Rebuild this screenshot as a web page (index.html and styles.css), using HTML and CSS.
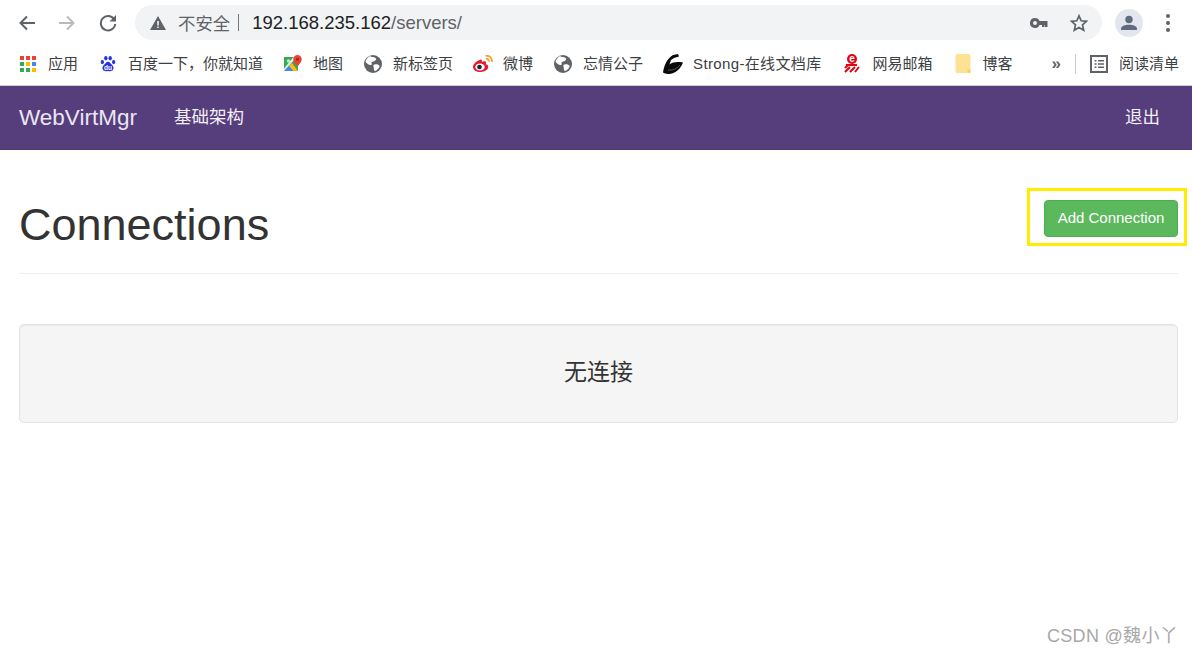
FILE: index.html
```html
<!DOCTYPE html>
<html lang="en">
<head>
    <meta charset="UTF-8">
    <title>WebVirtMgr</title>
    <link rel="stylesheet" href="styles.css">
</head>
<body>
    <div class="toolbar">
        <svg class="tool-icon" viewBox="0 0 18 18"><path d="M17 9H3M9 2.500L2.500 9 9 15.500" fill="none" stroke="#5f6368" stroke-width="2"/></svg>
        <svg class="tool-icon" viewBox="0 0 18 18"><path d="M1 9h14M9 2.500L15.500 9 9 15.500" fill="none" stroke="#b9bbbe" stroke-width="2"/></svg>
        <svg class="tool-icon reload" viewBox="0 0 18 18"><path d="M15 5.200A7.200 7.200 0 1 0 16.200 10" fill="none" stroke="#5f6368" stroke-width="2"/><path d="M17 1v6.500h-6.500z" fill="#5f6368"/></svg>
        <div class="address-bar">
            <svg class="warn-icon" viewBox="0 0 16 14"><path d="M8 0l8 14H0z" fill="#5f6368"/><path d="M7.200 5h1.600v4.500H7.200zM7.200 10.500h1.600V12H7.200z" fill="#f1f3f4"/></svg>
            <span class="not-secure">不安全</span>
            <span class="divider"></span>
            <span class="url"><span class="host">192.168.235.162</span>/servers/</span>
            <svg class="key-icon" viewBox="0 0 18 10"><path d="M5 0a5 5 0 1 0 4.600 7H12v2h2.500V7H15v2h2.500V3H9.600A5 5 0 0 0 5 0zm0 3a2 2 0 1 1 0 4 2 2 0 0 1 0-4z" fill="#5f6368"/></svg>
            <svg class="star-icon" viewBox="0 0 18 18"><path d="M9 1.800l2.200 5 5.300.5-4 3.600 1.200 5.300L9 13.400l-4.700 2.800 1.200-5.300-4-3.600 5.300-.5z" fill="none" stroke="#5f6368" stroke-width="1.700"/></svg>
        </div>
        <div class="avatar">
            <svg viewBox="0 0 16 16"><circle cx="8" cy="4.500" r="3.700" fill="#5f6b7e"/><path d="M0 15v-1.500C0 11 4 9.700 8 9.700s8 1.300 8 3.800V15z" fill="#5f6b7e"/></svg>
        </div>
        <div class="more-dots"><span></span><span></span><span></span></div>
    </div>

    <div class="bookmarks">
        <a class="bookmark">
            <svg class="bm-icon" viewBox="0 0 16 16">
                <rect width="4" height="4" fill="#ea4335"/><rect x="6" width="4" height="4" fill="#ea4335"/><rect x="12" width="4" height="4" fill="#ea4335"/>
                <rect y="6" width="4" height="4" fill="#34a853"/><rect x="6" y="6" width="4" height="4" fill="#fbbc04"/><rect x="12" y="6" width="4" height="4" fill="#4285f4"/>
                <rect y="12" width="4" height="4" fill="#34a853"/><rect x="6" y="12" width="4" height="4" fill="#34a853"/><rect x="12" y="12" width="4" height="4" fill="#fbbc04"/>
            </svg>
            应用
        </a>
        <a class="bookmark shift-1">
            <svg class="bm-icon" viewBox="0 0 16 17">
                <g fill="#2932e1">
                    <ellipse cx="2" cy="6.500" rx="1.800" ry="2.200"/><ellipse cx="5.700" cy="2.400" rx="1.800" ry="2.300"/><ellipse cx="10.300" cy="2.400" rx="1.800" ry="2.300"/><ellipse cx="14" cy="6.500" rx="1.800" ry="2.200"/>
                    <path d="M8 6c-2 0-2.500 1.800-4 3.100C1.800 11 1.600 13.500 2.800 15c1 1.300 3 1.200 5.200.9 2.200.3 4.200.4 5.200-.9 1.200-1.500 1-4-1.200-5.900C10.500 7.800 10 6 8 6z"/>
                </g>
                <text class="du" x="8" y="14.500" text-anchor="middle">du</text>
            </svg>
            百度一下，你就知道
        </a>
        <a class="bookmark">
            <svg class="bm-icon bm-wide" viewBox="0 0 18 18">
                <path d="M0 2h14v14H0z" fill="#34a853"/>
                <path d="M0 16l8-8 6 8z" fill="#4285f4"/>
                <path d="M8 8l6 8H9.500L5 11z" fill="#fbbc04"/>
                <path d="M0 13.500L9.500 2H13L0 16z" fill="#e8eaed"/>
                <circle cx="4.500" cy="6" r="1.800" fill="#c8e6c9"/>
                <path d="M13.500 0a4.200 4.200 0 0 0-4.200 4.200c0 3 4.200 7.300 4.200 7.300s4.200-4.300 4.200-7.300A4.200 4.200 0 0 0 13.500 0z" fill="#ea4335"/>
                <circle cx="13.500" cy="4.200" r="1.500" fill="#a52714"/>
            </svg>
            地图
        </a>
        <a class="bookmark">
            <svg class="bm-icon bm-wide" viewBox="0 0 18 18"><use href="#globe"/></svg>
            新标签页
        </a>
        <a class="bookmark shift-back">
            <svg class="bm-icon bm-weibo" viewBox="0 0 20 17">
                <path d="M8 4.500C4 5.500 0 9 0 12c0 3 3.500 5 7.500 5 4.500 0 7.800-2.500 7.800-5.200 0-1.500-1.500-2.200-2.500-2.500.5-1.200.4-2.200-.4-2.700-1-.6-2.500-.2-3.700.4.400-1.400.400-2.500-.7-2.500z" fill="#e6162d"/>
                <ellipse cx="7" cy="12" rx="4.800" ry="3.500" fill="#fff"/><circle cx="6.500" cy="12" r="2.300" fill="#222"/>
                <path d="M12.500 1c3.800-1 7 2 6.300 6M13 4c1.800-.4 3.200 1 2.800 2.800" fill="none" stroke="#f5a623" stroke-width="1.800"/>
            </svg>
            微博
        </a>
        <a class="bookmark">
            <svg class="bm-icon bm-wide" viewBox="0 0 18 18"><use href="#globe"/></svg>
            忘情公子
        </a>
        <a class="bookmark shift-back">
            <svg class="bm-icon bm-strong" viewBox="0 0 20 20">
                <path d="M10 1l5-1 1 2.500-5 1.500-3 2-1.500 4.500C10 8 14 7.500 20 8.500 18 14 14 18 9 19.500 6 20.500 2 20 0 18.500 1 13 3 5 10 1z" fill="#0a0a0a"/>
                <path d="M5 16c4 .5 9-1 12-5" fill="none" stroke="#777" stroke-width=".7"/>
            </svg>
            <span class="latin-wide">Strong-在线文档库</span>
        </a>
        <a class="bookmark shift-2">
            <svg class="bm-icon bm-mail" viewBox="0 0 16 19">
                <circle cx="8" cy="5" r="5" fill="#e60012"/>
                <text class="mail-e" x="8" y="8" text-anchor="middle">e</text>
                <path d="M2 11h11M1 14l3-3M1 18l5-5M6 18l5-5M11 18l4-5" fill="none" stroke="#e60012" stroke-width="2"/>
            </svg>
            网易邮箱
        </a>
        <a class="bookmark shift-1">
            <svg class="bm-icon bm-folder" viewBox="0 0 16 19"><path d="M2 0h12a1.500 1.500 0 0 1 1.500 1.500V19H2a1.500 1.500 0 0 1-1.500-1.500v-16A1.500 1.500 0 0 1 2 0z" fill="#fde293"/><path d="M12.500 19v-3.500h3V19z" fill="#f9cf5f"/></svg>
            博客
        </a>
        <span class="bm-more">»</span>
        <span class="bm-sep"></span>
        <a class="bookmark">
            <svg class="bm-icon bm-wide" viewBox="0 0 18 18"><path d="M1 1h16v16H1z" fill="none" stroke="#5f6368" stroke-width="2"/><path d="M4.500 5h2v1.500h-2zM8 5h6v1.500H8zM4.500 8.300h2v1.500h-2zM8 8.300h6v1.500H8zM4.500 11.600h2v1.500h-2zM8 11.600h6v1.500H8z" fill="#5f6368"/></svg>
            阅读清单
        </a>
    </div>

    <nav class="navbar">
        <a class="brand">WebVirtMgr</a>
        <a class="nav-link">基础架构</a>
        <a class="nav-link logout">退出</a>
    </nav>

    <div class="container">
        <div class="page-header">
            <h1>Connections</h1>
            <button class="btn-add">Add Connection</button>
        </div>
        <div class="well">
            <h3>无连接</h3>
        </div>
    </div>

    <div class="watermark">CSDN @魏小丫</div>

    <svg class="defs" width="0" height="0">
        <symbol id="globe" viewBox="0 0 18 18">
            <circle cx="9" cy="9" r="9" fill="#5f6368"/>
            <path d="M6 1c1.500 1.500 5 .5 6 2.500S9.500 6.500 8 7s1 2.500-1 3S3 8.500 1.500 7C2 4 4 2 6 1zM10.500 9.500c2-.5 4.500 0 5 1.500s-3 5-4.500 5-1-3.500-1.500-4.500 0-1.800 1-2z" fill="#fff"/>
        </symbol>
    </svg>
</body>
</html>
```

FILE: styles.css
```css
body {
    margin: 0;
    font-family: "Liberation Sans", "Noto Sans CJK SC", sans-serif;
    background-color: #fff;
    color: #333;
}
a {
    text-decoration: none;
}

/* browser chrome */
.toolbar {
    height: 45px;
    display: flex;
    align-items: center;
    padding: 0 22px 0 18px;
    box-sizing: border-box;
}
.tool-icon {
    width: 18px;
    height: 18px;
    margin-right: 22px;
    flex: none;
}
.reload {
    margin-left: 1px;
}
.address-bar {
    flex: 1;
    height: 35px;
    margin-left: -4px;
    margin-right: 13px;
    background-color: #f1f3f4;
    border-radius: 18px;
    display: flex;
    align-items: center;
    padding: 0 14px 0 15px;
    font-size: 18.5px;
    color: #5f6368;
}
.warn-icon {
    width: 16px;
    height: 14px;
    margin-right: 12px;
}
.not-secure {
    font-size: 17.400px;
}
.divider {
    width: 1px;
    height: 17px;
    background-color: #777;
    margin: 0 13px 0 8px;
}
.url {
    flex: 1;
}
.host {
    color: #202124;
}
.key-icon {
    width: 18px;
    height: 10px;
    margin-right: 22px;
}
.star-icon {
    width: 18px;
    height: 18px;
    margin-right: 0;
}
.avatar {
    width: 28px;
    height: 28px;
    border-radius: 50%;
    background-color: #e3e6ec;
    display: flex;
    align-items: center;
    justify-content: center;
}
.avatar svg {
    width: 16px;
    height: 16px;
}
.more-dots {
    width: 4px;
    margin: 0 0 0 23px;
    display: flex;
    flex-direction: column;
    gap: 3px;
}
.more-dots span {
    width: 4px;
    height: 4px;
    border-radius: 50%;
    background-color: #5f6368;
}

.bookmarks {
    height: 41px;
    display: flex;
    align-items: center;
    padding: 0 13px 3px 20px;
    box-sizing: border-box;
    gap: 21px;
    border-bottom: 1px solid #d0d0d0;
}
.bookmark {
    display: flex;
    align-items: center;
    gap: 12px;
    font-size: 15px;
    line-height: 20px;
    color: #3c4043;
    white-space: nowrap;
}
.shift-1 {
    margin-left: 1px;
}
.shift-2 {
    margin-left: 2px;
}
.shift-back {
    margin-left: -1px;
}
.bm-icon {
    width: 16px;
    height: 16px;
    flex: none;
}
.bm-wide {
    width: 18px;
    height: 18px;
    margin-right: -1px;
}
.bm-weibo {
    width: 20px;
    height: 17px;
    margin-right: -2px;
}
.bm-strong {
    width: 20px;
    height: 20px;
    margin-right: -2px;
}
.bm-mail,
.bm-folder {
    height: 19px;
}
.latin-wide {
    letter-spacing: 0.35px;
}
.du {
    font-family: "Liberation Sans", sans-serif;
    font-size: 7px;
    font-weight: 700;
    fill: #fff;
}
.mail-e {
    font-family: "Liberation Sans", sans-serif;
    font-size: 10px;
    font-weight: 700;
    fill: #fff;
}
.bm-more {
    margin-left: 18px;
    margin-right: -8px;
    font-size: 17px;
    font-weight: 700;
    color: #5f6368;
}
.bm-sep {
    width: 1px;
    height: 20px;
    background-color: #ccc;
    margin-left: 1px;
    margin-right: -7px;
}

/* app */
.navbar {
    height: 64px;
    background-color: #563d7c;
    border-bottom: 1px solid #4e3870;
    display: flex;
    align-items: center;
    padding: 0 32px 0 19px;
    box-sizing: border-box;
}
.brand {
    font-size: 22.500px;
    color: #ebe6f2;
    margin-right: 37px;
}
.nav-link {
    font-size: 17.500px;
    color: #f2eff6;
    padding-bottom: 4px;
}
.logout {
    margin-left: auto;
}
.container {
    padding: 0 14px 0 19px;
}
.page-header {
    height: 124px;
    box-sizing: border-box;
    border-bottom: 1px solid #eee;
    display: flex;
    justify-content: space-between;
    align-items: flex-start;
    padding-top: 50px;
}
.page-header h1 {
    margin: 0;
    font-size: 45px;
    font-weight: 400;
    line-height: 50px;
}
.btn-add {
    position: relative;
    width: 134px;
    height: 37px;
    padding: 0 0 2px;
    background-color: #5cb85c;
    border: 1px solid #4cae4c;
    border-radius: 4px;
    color: #fff;
    font-family: inherit;
    font-size: 15px;
}
/* yellow annotation around the button */
.btn-add::after {
    content: "";
    position: absolute;
    left: -18px;
    top: -13px;
    width: 154px;
    height: 52px;
    border: 3px solid #ffed00;
}
.well {
    margin-top: 50px;
    height: 99px;
    box-sizing: border-box;
    padding-bottom: 7px;
    background-color: #f5f5f5;
    border: 1px solid #e3e3e3;
    border-radius: 5px;
    display: flex;
    align-items: center;
    justify-content: center;
    box-shadow: inset 0 1px 1px rgba(0, 0, 0, 0.05);
}
.well h3 {
    margin: 0;
    font-size: 23px;
    font-weight: 400;
}
.watermark {
    position: absolute;
    right: 14px;
    top: 624px;
    font-size: 18px;
    letter-spacing: 0.3px;
    color: #a8a8a8;
    line-height: 24px;
}
.defs {
    position: absolute;
}
```
